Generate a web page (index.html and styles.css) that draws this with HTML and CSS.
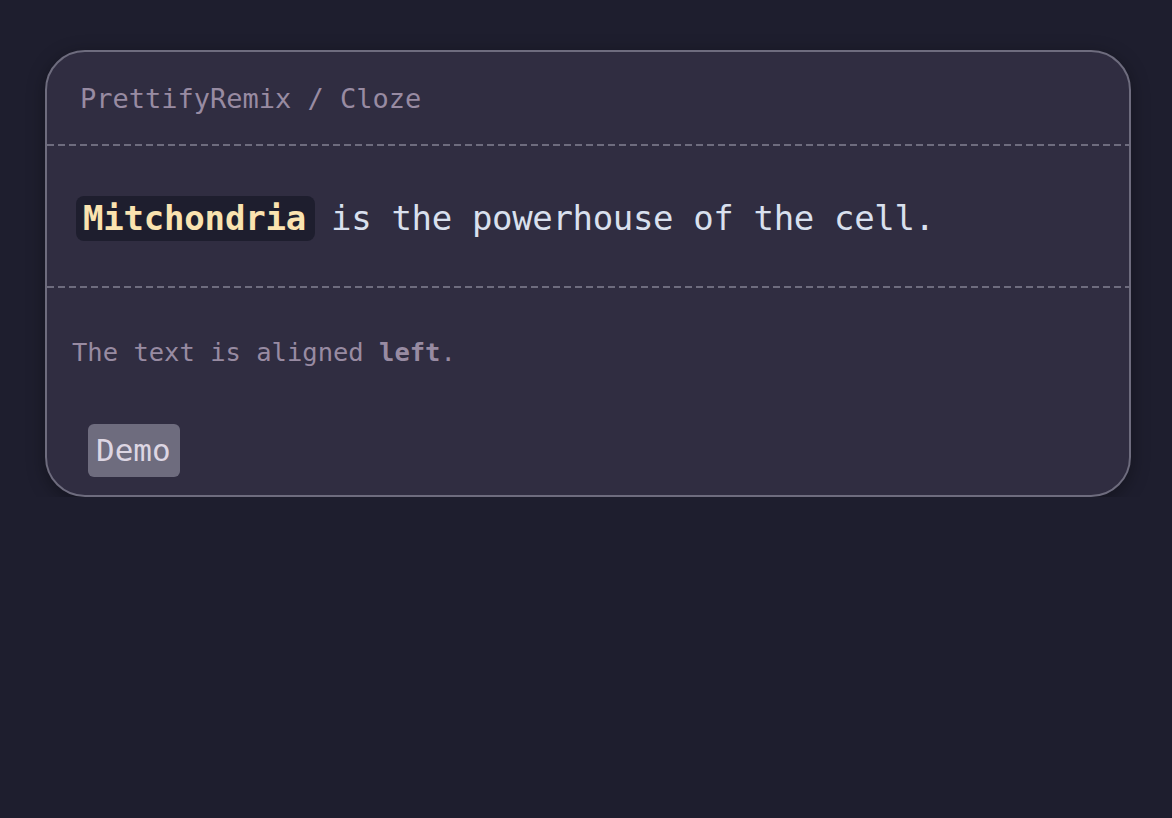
FILE: index.html
```html
<!DOCTYPE html>
<html lang="en">
<head>
<meta charset="utf-8">
<title>PrettifyRemix / Cloze</title>
<link rel="stylesheet" href="styles.css">
</head>
<body>
  <main class="page">
    <section class="card">
      <header class="card-header">PrettifyRemix / Cloze</header>
      <div class="divider"></div>
      <div class="card-body">
        <p class="sentence"><span class="cloze">Mitchondria</span> is the powerhouse of the cell.</p>
      </div>
      <div class="divider"></div>
      <footer class="card-footer">
        <p class="note">The text is aligned <strong>left</strong>.</p>
        <div class="tags"><span class="tag">Demo</span></div>
      </footer>
    </section>
  </main>
</body>
</html>
```

FILE: styles.css
```css
html, body {
  margin: 0;
  padding: 0;
  background: #1e1e2e;
  font-family: "DejaVu Sans Mono", "Liberation Mono", monospace;
}

.page {
  padding: 50px 41px 0 45px;
}

.card {
  background: #302d41;
  border: 2px solid #6e6c7e;
  border-radius: 40px;
  box-shadow: 0 4px 18px rgba(0, 0, 0, 0.35);
  display: flex;
  flex-direction: column;
}

.card-header {
  height: 92px;
  display: flex;
  align-items: center;
  padding-left: 33px;
  font-size: 27px;
  color: #988ba2;
}

.divider {
  height: 2px;
  background: repeating-linear-gradient(to right, #6e6c7e 0 7px, transparent 7px 11px);
}

.card-body {
  height: 140px;
  display: flex;
  align-items: center;
  padding-left: 29px;
}

.sentence {
  margin: 0;
  font-size: 34px;
  color: #d9e0ee;
  line-height: 45px;
  padding-top: 5px;
  letter-spacing: -0.35px;
}

.cloze {
  display: inline-block;
  background: #1e1e2e;
  color: #fae3b0;
  font-weight: bold;
  border-radius: 8px;
  padding: 0 9px 0 7px;
  margin-right: -4px;
  letter-spacing: -0.2px;
}

.card-footer {
  padding: 46px 0 18px 25px;
  display: flex;
  flex-direction: column;
  gap: 54px;
}

.note {
  margin: 0;
  font-size: 25.5px;
  line-height: 36px;
  color: #988ba2;
}

.note strong {
  font-weight: bold;
}

.tags {
  display: flex;
  padding-left: 16px;
}

.tag {
  display: inline-block;
  height: 53px;
  line-height: 53px;
  padding: 0 9px 0 8px;
  background: #6e6c7e;
  color: #ddd6e3;
  font-size: 31px;
  border-radius: 6px;
}
```
